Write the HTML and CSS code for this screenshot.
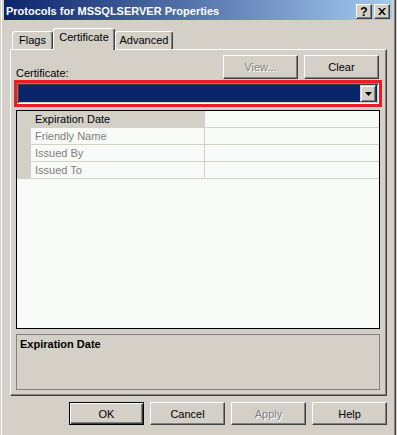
FILE: index.html
```html
<!DOCTYPE html>
<html>
<head>
<meta charset="utf-8">
<title>Protocols for MSSQLSERVER Properties</title>
<link rel="stylesheet" href="styles.css">
</head>
<body>
<div class="window">
  <div class="window-in">
    <div class="titlebar">
      <span class="title">Protocols for MSSQLSERVER Properties</span>
      <div class="cbtns">
        <div class="cbtn q">?</div>
        <div class="cbtn">
          <svg width="8" height="7" viewBox="0 0 8 7"><path d="M0 0h2l2 2.5L6 0h2L5 3.5 8 7H6L4 4.5 2 7H0l3-3.5z" fill="#000"/></svg>
        </div>
      </div>
    </div>
    <div class="content">
      <div class="tabs">
        <div class="tab t-flags">Flags</div>
        <div class="tab t-cert active">Certificate</div>
        <div class="tab t-adv">Advanced</div>
      </div>
      <div class="panel">
        <div class="toprow">
          <span class="label">Certificate:</span>
          <button class="btn disabled">View...</button>
          <button class="btn clear">Clear</button>
        </div>
        <div class="redbox">
          <div class="combo">
            <div class="combo-field"></div>
            <div class="combo-btn">
              <svg width="7" height="4" viewBox="0 0 7 4"><path d="M0 0h7L3.5 4z" fill="#000"/></svg>
            </div>
          </div>
        </div>
        <div class="grid">
          <div class="row">
            <div class="strip"></div>
            <div class="name sel">Expiration Date</div>
            <div class="value"></div>
          </div>
          <div class="row">
            <div class="strip"></div>
            <div class="name">Friendly Name</div>
            <div class="value"></div>
          </div>
          <div class="row">
            <div class="strip"></div>
            <div class="name">Issued By</div>
            <div class="value"></div>
          </div>
          <div class="row">
            <div class="strip"></div>
            <div class="name">Issued To</div>
            <div class="value"></div>
          </div>
        </div>
        <div class="desc"><b>Expiration Date</b></div>
      </div>
      <div class="buttons">
        <button class="btn default">OK</button>
        <button class="btn">Cancel</button>
        <button class="btn disabled">Apply</button>
        <button class="btn">Help</button>
      </div>
    </div>
  </div>
</div>
</body>
</html>
```
FILE: styles.css
```css
* { box-sizing: border-box; }
html, body { margin: 0; padding: 0; }
body {
  width: 397px;
  height: 435px;
  overflow: hidden;
  background: #d4d0c8;
  font-family: "Liberation Sans", Arial, sans-serif;
  font-size: 11px;
  color: #000;
}
.window {
  width: 396px;
  height: 450px;
  margin-top: -4px;
  border: 1px solid;
  border-color: #d4d0c8 #404040 #404040 #d4d0c8;
}
.window-in {
  height: 100%;
  border: 1px solid;
  border-color: #fff #808080 #808080 #fff;
  padding: 2px;
}
.titlebar {
  height: 20px;
  display: flex;
  align-items: flex-start;
  padding: 0 2px;
  background: linear-gradient(to right, #0a246a, #a6caf0);
}
.title {
  flex: 1;
  margin-top: 5px;
  line-height: 13px;
  font-weight: bold;
  color: #fff;
  white-space: nowrap;
}
.cbtns {
  display: flex;
  gap: 2px;
  margin-top: 4px;
}
.cbtn {
  width: 16px;
  height: 15px;
  background: #d4d0c8;
  border: 1px solid;
  border-color: #fff #404040 #404040 #fff;
  box-shadow: inset -1px -1px #808080;
  display: flex;
  align-items: center;
  justify-content: center;
}
.cbtn.q {
  font-weight: bold;
  font-size: 12px;
  line-height: 12px;
}
.content {
  padding: 0 5px 0 6px;
}
.tabs {
  display: flex;
  align-items: flex-end;
  height: 21px;
  margin-top: 8px;
  padding-left: 2px;
}
.tab {
  height: 18px;
  padding-top: 2px;
  line-height: 13px;
  text-align: center;
  background: #d4d0c8;
  border: 1px solid;
  border-bottom: none;
  border-color: #fff #404040 transparent #fff;
  border-radius: 3px 3px 0 0;
  box-shadow: inset -1px 0 #808080;
}
.t-flags { width: 41px; }
.t-cert { width: 62px; }
.t-adv { width: 58px; }
.tab.active {
  height: 22px;
  margin-bottom: -1px;
  position: relative;
  z-index: 1;
}
.panel {
  height: 347px;
  border: 1px solid;
  border-color: #fff #404040 #404040 #fff;
  box-shadow: inset -1px -1px #808080;
  padding: 5px 6px 5px 5px;
}
.toprow {
  display: flex;
  align-items: flex-end;
  height: 24px;
  gap: 6px;
}
.label {
  flex: 1;
  line-height: 13px;
  margin-bottom: -1px;
}
.btn {
  width: 75px;
  height: 23px;
  padding: 0;
  margin: 0;
  font-family: inherit;
  font-size: 11px;
  color: #000;
  background: #d4d0c8;
  border: 1px solid;
  border-color: #fff #404040 #404040 #fff;
  box-shadow: inset -1px -1px #808080;
  text-align: center;
}
.toprow .btn { height: 24px; align-self: flex-start; }
.btn.clear { margin-right: 1px; }
.btn.disabled {
  color: #808080;
  text-shadow: 1px 1px #fff;
}
.btn.default {
  border: 1px solid #000;
  box-shadow: inset 1px 1px #fff, inset -1px -1px #404040, inset -2px -2px #808080;
}
.redbox {
  margin: 1px -2px 0;
  height: 27px;
  border: 3px solid #ec1c24;
}
.combo {
  height: 21px;
  display: flex;
  border: 1px solid;
  border-color: #808080 #fff #fff #808080;
  box-shadow: inset 1px 1px #404040, inset -1px -1px #d4d0c8;
  padding: 1px 2px 1px 1px;
  background: #0a246a;
}
.combo-field {
  flex: 1;
  background: #0a246a;
}
.combo-btn {
  width: 16px;
  height: 17px;
  background: #d4d0c8;
  border: 1px solid;
  border-color: #d4d0c8 #404040 #404040 #d4d0c8;
  box-shadow: inset 1px 1px #fff, inset -1px -1px #808080;
  display: flex;
  align-items: center;
  justify-content: center;
}
.grid {
  margin-top: 3px;
  height: 219px;
  border: 1px solid #000;
  background: #f7faf6;
}
.row {
  display: flex;
  height: 17px;
}
.strip {
  width: 14px;
  background: #d4d0c8;
}
.name {
  width: 173px;
  padding-left: 4px;
  line-height: 16px;
  color: #808080;
  border-bottom: 1px solid #d4d0c8;
  white-space: nowrap;
}
.name.sel {
  background: #d4d0c8;
  color: #000;
}
.value {
  flex: 1;
  border-left: 1px solid #d4d0c8;
  border-bottom: 1px solid #d4d0c8;
}
.desc {
  margin-top: 5px;
  height: 56px;
  border: 1px solid #808080;
  padding: 3px 3px;
  line-height: 13px;
}
.buttons {
  display: flex;
  justify-content: flex-end;
  gap: 6px;
  margin-top: 6px;
}
```
